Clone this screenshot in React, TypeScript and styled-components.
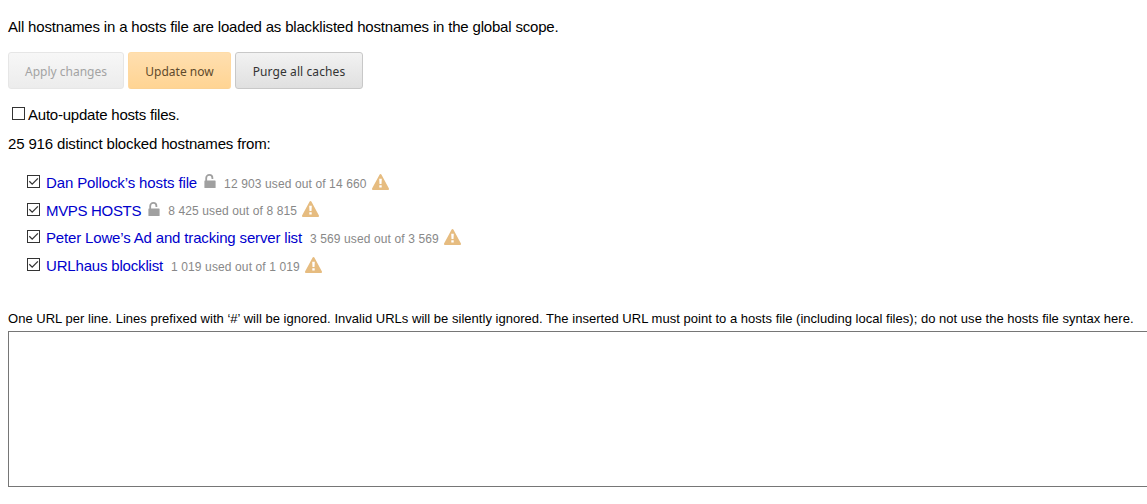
import styled, { createGlobalStyle, css } from 'styled-components'

const GlobalStyle = createGlobalStyle`
  body {
    margin: 0;
    background: #fff;
    color: #000;
    font: 15px/17px 'Liberation Sans', Arial, sans-serif;
    overflow: hidden;
  }
`

const Page = styled.main`
  display: flex;
  flex-direction: column;
  align-items: flex-start;
  height: 504px;
  padding: 18px 0 0 8px;
  box-sizing: border-box;
  overflow: hidden;
  white-space: nowrap;
`

const Intro = styled.p`
  margin: 0 0 17px;
  letter-spacing: -0.182px;
`

const Buttons = styled.div`
  display: flex;
  gap: 4px;
  margin-bottom: 17px;
`

const Button = styled.button<{ $width: number; $important?: boolean }>`
  width: ${({ $width }) => $width}px;
  height: 37px;
  padding: 2px 0 0;
  border: 1px solid #c8c8c8;
  border-radius: 3px;
  background: linear-gradient(#f2f2f2, #e0e0e0);
  color: #333;
  font: 12px 'Noto Sans', sans-serif;
  letter-spacing: 0.1px;
  white-space: nowrap;
  ${({ $important }) =>
    $important &&
    css`
      border-color: #ffdca8 #ffd9a0 #fbd294;
      background: linear-gradient(#ffdfb0, #ffd493);
      color: #5f4a2c;
      letter-spacing: 0;
    `}
  &:disabled {
    border-color: #e6e6e6;
    background: linear-gradient(#f7f7f7, #ececec);
    color: #a3a3a3;
    letter-spacing: 0;
  }
`

const AutoUpdate = styled.label`
  display: flex;
  align-items: center;
  gap: 3px;
  margin: 0 0 12px 4px;
  letter-spacing: -0.22px;
`

const Summary = styled.p`
  margin: 0 0 17px;
  letter-spacing: -0.15px;
`

const List = styled.ul`
  margin: 0 0 31px;
  padding: 0 0 0 19px;
  list-style: none;
`

const ListItem = styled.li`
  display: flex;
  align-items: center;
  height: 27.6px;
`

const Box = styled.svg`
  display: block;
  flex: none;
  width: 13px;
  height: 13px;
  margin-top: -2px;
`

const HostsLink = styled.a<{ $spacing: number }>`
  margin: 0 0 0 6px;
  color: #0000cc;
  text-decoration: none;
  letter-spacing: ${({ $spacing }) => $spacing}px;
`

const LockIcon = styled.svg`
  width: 12px;
  height: 14px;
  margin: -3px 0 0 7px;
`

const Counts = styled.span`
  margin: 3px 0 0 8px;
  color: #888;
  font-size: 12px;
  letter-spacing: 0.12px;
`

const WarningIcon = styled.svg`
  width: 18px;
  height: 16px;
  margin: -2px 0 0 5px;
`

const Hint = styled.p`
  margin: 0 0 4px;
  font-size: 13px;
  letter-spacing: 0.025px;
`

const Urls = styled.textarea`
  display: block;
  width: 1200px;
  height: 156px;
  box-sizing: border-box;
  border: 1px solid #767676;
  background: #fff;
  resize: none;
`

const Checkbox = ({ checked = false }: { checked?: boolean }) => (
  <Box viewBox='0 0 13 13' fill='none'>
    <rect x='0.5' y='0.5' width='12' height='12' fill='#fff' stroke='#333' />
    {checked && <path d='M2.3 6.3 5.2 9.2 10.9 3.4' stroke='#333' strokeWidth='1.3' />}
  </Box>
)

const Unlocked = () => (
  <LockIcon viewBox='0 0 12 14'>
    <path d='M2.2 7V4a3.1 3.1 0 0 1 6.2 0v1' fill='none' stroke='#a0a0a0' strokeWidth='1.8' />
    <rect x='0.4' y='6.4' width='11.2' height='7.6' rx='0.6' fill='#a0a0a0' />
  </LockIcon>
)

const Warning = () => (
  <WarningIcon viewBox='0 0 18 16'>
    <path d='M7.5.7a1.15 1.15 0 0 1 2 0L16.8 14.3a1.1 1.1 0 0 1-1 1.7H1.2a1.1 1.1 0 0 1-1-1.7z' fill='#e6bc80' />
    <path d='M7.2 4.8h2.6l-.3 5.2h-2zM7.3 11.3h2.4v2.2H7.3z' fill='#fff' />
  </WarningIcon>
)

const hostsFiles = [
  { name: 'Dan Pollock’s hosts file', spacing: -0.12, counts: '12 903 used out of 14 660', unlocked: true },
  { name: 'MVPS HOSTS', spacing: -0.32, counts: '8 425 used out of 8 815', unlocked: true },
  { name: 'Peter Lowe’s Ad and tracking server list', spacing: -0.16, counts: '3 569 used out of 3 569' },
  { name: 'URLhaus blocklist', spacing: -0.18, counts: '1 019 used out of 1 019' },
]

const App = () => (
  <>
    <GlobalStyle />
    <Page>
      <Intro>All hostnames in a hosts file are loaded as blacklisted hostnames in the global scope.</Intro>
      <Buttons>
        <Button $width={116} disabled>
          Apply changes
        </Button>
        <Button $width={103} $important>
          Update now
        </Button>
        <Button $width={128}>Purge all caches</Button>
      </Buttons>
      <AutoUpdate>
        <Checkbox />
        Auto-update hosts files.
      </AutoUpdate>
      <Summary>25 916 distinct blocked hostnames from:</Summary>
      <List>
        {hostsFiles.map(({ name, spacing, counts, unlocked }) => (
          <ListItem key={name}>
            <Checkbox checked />
            <HostsLink href='#' $spacing={spacing}>
              {name}
            </HostsLink>
            {unlocked && <Unlocked />}
            <Counts>{counts}</Counts>
            <Warning />
          </ListItem>
        ))}
      </List>
      <Hint>
        One URL per line. Lines prefixed with ‘#’ will be ignored. Invalid URLs will be silently ignored. The inserted URL
        must point to a hosts file (including local files); do not use the hosts file syntax here.
      </Hint>
      <Urls />
    </Page>
  </>
)

export default App
